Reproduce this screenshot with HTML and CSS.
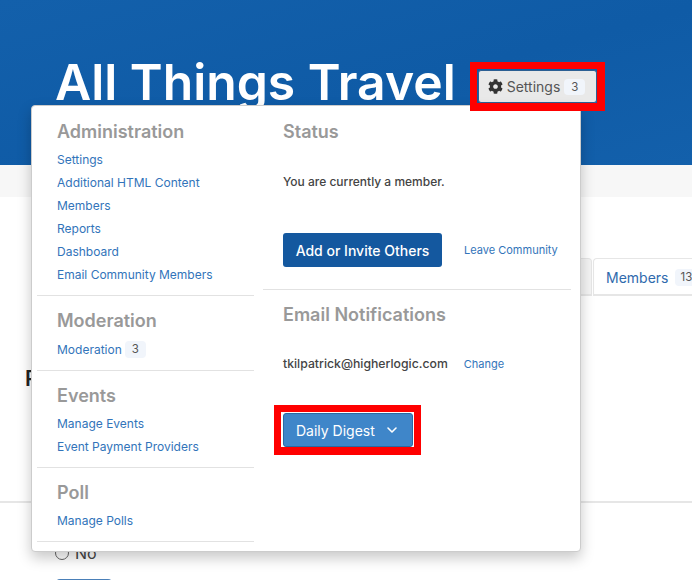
FILE: index.html
```html
<!DOCTYPE html>
<html lang="en">
<head>
<meta charset="utf-8">
<title>All Things Travel</title>
<link rel="stylesheet" href="styles.css">
</head>
<body>
<div class="page">
  <header class="hero">
    <h1 class="title">All Things Travel</h1>
    <button class="settings-btn">
      <svg class="gear" viewBox="0 0 512 512" aria-hidden="true"><path fill="#333" d="M487.4 315.7l-42.6-24.6c4.3-23.2 4.3-47 0-70.2l42.6-24.6c4.9-2.8 7.1-8.6 5.5-14-11.1-35.6-30-67.8-54.7-94.6-3.8-4.1-10-5.1-14.8-2.3L380.8 110c-17.9-15.4-38.5-27.3-60.8-35.1V25.8c0-5.6-3.9-10.5-9.4-11.7-36.7-8.2-74.3-7.8-109.2 0-5.5 1.2-9.4 6.1-9.4 11.7V75c-22.2 7.9-42.8 19.8-60.8 35.1L88.7 85.5c-4.9-2.8-11-1.9-14.8 2.3-24.7 26.7-43.6 58.9-54.7 94.6-1.7 5.4.6 11.2 5.5 14L67.3 221c-4.3 23.2-4.3 47 0 70.2l-42.6 24.6c-4.9 2.8-7.1 8.6-5.5 14 11.1 35.6 30 67.8 54.7 94.6 3.8 4.1 10 5.1 14.8 2.3l42.6-24.6c17.9 15.4 38.5 27.3 60.8 35.1v49.2c0 5.6 3.9 10.5 9.4 11.7 36.7 8.2 74.3 7.8 109.2 0 5.5-1.2 9.4-6.1 9.4-11.7v-49.2c22.2-7.9 42.8-19.8 60.8-35.1l42.6 24.6c4.9 2.8 11 1.9 14.8-2.3 24.7-26.7 43.6-58.9 54.7-94.6 1.5-5.5-.7-11.3-5.6-14.1zM256 336c-44.1 0-80-35.9-80-80s35.9-80 80-80 80 35.9 80 80-35.9 80-80 80z"/></svg>
      <span>Settings</span>
      <span class="badge">3</span>
    </button>
  </header>
  <div class="strip"></div>
  <nav class="tabs">
    <div class="tab-stub"></div>
    <div class="tab"><span class="tab-label">Members</span><span class="badge tab-badge">13</span></div>
  </nav>
  <section class="poll">
    <h2 class="poll-title">Poll</h2>
    <hr class="poll-rule">
    <label class="poll-option"><span class="radio"></span>No</label>
    <div class="poll-btn"></div>
  </section>

  <div class="menu">
    <div class="menu-left">
      <div class="group">
        <h3 class="menu-heading">Administration</h3>
        <ul class="links">
          <li><a href="#">Settings</a></li>
          <li><a href="#">Additional HTML Content</a></li>
          <li><a href="#">Members</a></li>
          <li><a href="#">Reports</a></li>
          <li><a href="#">Dashboard</a></li>
          <li><a href="#">Email Community Members</a></li>
        </ul>
      </div>
      <div class="group">
        <h3 class="menu-heading">Moderation</h3>
        <ul class="links">
          <li><a href="#">Moderation</a><span class="badge small">3</span></li>
        </ul>
      </div>
      <div class="group">
        <h3 class="menu-heading">Events</h3>
        <ul class="links">
          <li><a href="#">Manage Events</a></li>
          <li><a href="#">Event Payment Providers</a></li>
        </ul>
      </div>
      <div class="group">
        <h3 class="menu-heading">Poll</h3>
        <ul class="links">
          <li><a href="#">Manage Polls</a></li>
        </ul>
      </div>
    </div>
    <div class="menu-right">
      <div class="status">
        <h3 class="menu-heading">Status</h3>
        <p class="member-note">You are currently a member.</p>
        <div class="action-row">
          <button class="primary-btn">Add or Invite Others</button>
          <a class="small-link" href="#">Leave Community</a>
        </div>
      </div>
      <div class="notify">
        <h3 class="menu-heading">Email Notifications</h3>
        <div class="email-row">
          <span class="email">tkilpatrick@higherlogic.com</span>
          <a class="small-link" href="#">Change</a>
        </div>
        <button class="digest-btn">Daily Digest
          <svg class="chev" viewBox="0 0 12 8" aria-hidden="true"><path d="M2 2l4 4 4-4" fill="none" stroke="#fff" stroke-width="1.6" stroke-linecap="round" stroke-linejoin="round"/></svg>
        </button>
      </div>
    </div>
  </div>

  <div class="callout callout-settings"></div>
  <div class="callout callout-digest"></div>
</div>
</body>
</html>
```
FILE: styles.css
```css
* { box-sizing: border-box; }
html, body { margin: 0; padding: 0; }
body { font-family: Inter, "Liberation Sans", sans-serif; background: #fff; color: #333; overflow: hidden; }
.page { position: relative; width: 692px; height: 580px; overflow: hidden; }

.hero { height: 165px; background: linear-gradient(165deg, #1360ab 0%, #0f5ba6 55%, #1360ab 100%); display: flex; align-items: flex-start; padding: 52px 0 0 55px; }
.title { margin: 0; font-size: 49.8px; line-height: 60px; font-weight: 600; color: #fff; letter-spacing: 0; white-space: nowrap; flex: none; }
.settings-btn { flex: none; margin: 18px 0 0 22px; width: 119px; height: 33px; background: #e9e9e9; border: 1px solid #2c5f93; border-radius: 3px; display: flex; align-items: center; padding: 0 0 0 9px; font: 14px Inter, sans-serif; color: #555; }
.gear { width: 15px; height: 15px; margin-right: 4px; }
.badge { background: #f1f5fb; border-radius: 4px; color: #555; font-size: 11.5px; text-align: center; }
.settings-btn .badge { width: 21px; height: 16px; line-height: 16px; margin-left: 4px; }

.strip { height: 32px; background: #f7f7f7; }

.tabs { display: flex; justify-content: flex-end; height: 99px; padding-top: 61px; }
.tab-stub { width: 20px; height: 38px; margin-right: 1px; background: #f4f4f4; border: 1px solid #e6e6e6; border-bottom: 2px solid #e6e6e6; border-radius: 0 4px 0 0; }
.tab { width: 99px; height: 38px; padding: 10px 0 0 12px; border: 1px solid #e6e6e6; border-right: 0; border-bottom: 2px solid #e6e6e6; border-radius: 4px 0 0 0; white-space: nowrap; overflow: hidden; display: flex; align-items: flex-start; }
.tab-label { color: #2f6aad; font-size: 14px; line-height: 17px; }
.tab-badge { margin-left: 7px; padding: 0 5px; font-size: 11.5px; line-height: 17px; }

.poll { position: relative; height: 285px; }
.poll-title { margin: 0; padding: 70px 0 0 25px; font-size: 21px; line-height: 25px; font-weight: 600; color: #222; }
.poll-rule { position: absolute; top: 205px; left: 0; right: 0; margin: 0; border: 0; border-top: 2px solid #e6e6e6; }
.poll-option { position: absolute; top: 247px; left: 55px; display: flex; align-items: center; gap: 6px; font-size: 16px; line-height: 20px; color: #444; }
.radio { width: 14px; height: 14px; border: 1px solid #666; border-radius: 50%; }
.poll-btn { position: absolute; top: 283px; left: 56px; width: 56px; height: 30px; background: #4a7fb8; border-radius: 4px; }

.menu { position: absolute; left: 31px; top: 105px; width: 550px; height: 447px; background: #fff; border: 1px solid #ccc; border-radius: 4px; box-shadow: 0 6px 14px rgba(0,0,0,.22); display: flex; }
.menu-left { width: 222px; padding-left: 5px; }
.group { padding: 14px 0 11px 20px; border-bottom: 1px solid #e2e2e2; }
.group:nth-child(1) { height: 190px; padding-top: 15px; }
.group:nth-child(2) { height: 75px; }
.group:nth-child(3) { height: 97px; }
.group:nth-child(4) { height: 74px; }
.menu-heading { margin: 0; font-size: 18px; line-height: 22px; font-weight: 600; color: #999; }
.links { list-style: none; margin: 5px 0 0; padding: 0; }
.group:nth-child(2) .links { margin-top: 6px; }
.links li { height: 23px; display: flex; align-items: center; font-size: 12px; }
.links a { color: #3274ba; text-decoration: none; }
.badge.small { width: 21px; height: 17px; line-height: 17px; margin-left: 3px; }

.menu-right { flex: 1; padding: 0 9px 0 9px; }
.status { height: 184px; padding: 15px 0 0 20px; border-bottom: 1px solid #e2e2e2; }
.member-note { margin: 30px 0 0; font-size: 12px; line-height: 18px; font-weight: 500; color: #444; }
.action-row { display: flex; align-items: center; margin-top: 42px; gap: 22px; }
.primary-btn { width: 159px; height: 34px; background: #14589f; color: #fff; border: 0; border-radius: 3px; font: 500 14px Inter, sans-serif; }
.small-link { color: #3274ba; font-size: 11px; text-decoration: none; }
.notify { padding: 14px 0 0 20px; }
.email-row { display: flex; align-items: center; margin-top: 30px; gap: 16px; }
.email { font-size: 12.25px; font-weight: 500; color: #444; }
.digest-btn { margin: 42px 0 0 0; width: 130px; height: 34px; background: #3f86c9; border: 1px solid #2a6aa3; border-radius: 3px; color: #fff; font: 14px Inter, sans-serif; display: flex; align-items: center; padding: 0 0 0 12px; }
.chev { width: 12px; height: 8px; margin-left: 11px; }

.callout { position: absolute; border: 7px solid #f00; }
.callout-settings { left: 470px; top: 62px; width: 135px; height: 49px; border-width: 7px 8px 8px 7px; }
.callout-digest { left: 274px; top: 405px; width: 147px; height: 50px; border-bottom-width: 8px; }
```
